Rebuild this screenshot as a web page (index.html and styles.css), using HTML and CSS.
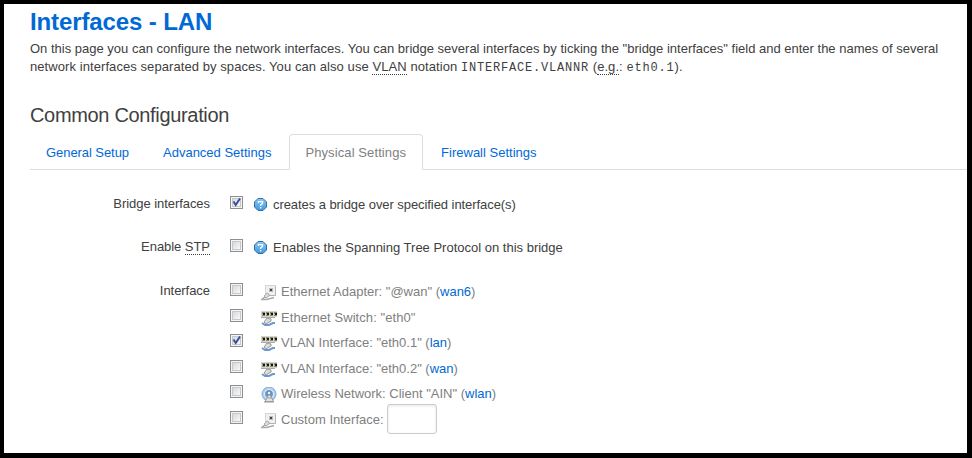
FILE: index.html
```html
<!DOCTYPE html>
<html lang="en">
<head>
<meta charset="utf-8">
<title>Interfaces - LAN</title>
<link rel="stylesheet" href="styles.css">
</head>
<body>
<svg class="sprites" aria-hidden="true">
  <defs>
    <linearGradient id="blue" x1="0" y1="0" x2="0" y2="1"><stop offset="0" stop-color="#8cc8f2"/><stop offset="1" stop-color="#3f9ae0"/></linearGradient>
    <symbol id="help" viewBox="0 0 13 13">
      <path d="M4 .5h5L12.500 4v5L9 12.500H4L.5 9V4z" fill="url(#blue)" stroke="#326da5"/>
      <path d="M4.500 5V3.700h4v1.800L6.600 7v1" fill="none" stroke="#fff" stroke-width="1.300"/>
      <path d="M5.900 9h1.400v1.400H5.900z" fill="#fff"/>
    </symbol>
    <symbol id="adapter" viewBox="0 0 16 16">
      <path d="M4.500.5h10v10h-10z" fill="#f0f0f0" stroke="#d4d4d4"/>
      <path d="M14.500 1v9.500H7" fill="none" stroke="#b4b4b4"/>
      <path d="M8 3h4v4H8z" fill="#bbb"/><path d="M9 4h2v2H9z" fill="#444"/>
      <path d="M3 11l3-3 2 1v2l-3 2z" fill="#ddd" stroke="#aaa"/>
      <path d="M0 15l4-3M1 14.500h5l7-2" fill="none" stroke="#aaa" stroke-width="1.500"/>
    </symbol>
    <symbol id="switch" viewBox="0 0 16 16">
      <path d="M0 0h16v6H0z" fill="#d4d4d4"/>
      <path d="M1 1h3v4H1zM5 1h3v4H5zM9 1h3v4H9zM13 1h3v4h-3z" fill="#8b8b78"/>
      <path d="M2 2h2v2H2zM6 2h2v2H6zM10 2h2v2h-2zM14 2h2v2h-2z" fill="#17170f"/>
      <path d="M1 3h1v1H1zM5 3h1v1H5zM9 3h1v1H9zM13 3h1v1h-1z" fill="#d8c62d"/>
      <path d="M0 6.500h14" stroke="#aaa"/>
      <path d="M3 11l3-4 4 1v2l-5 3z" fill="#dcdcdc" stroke="#999"/>
      <path d="M1 12l3 2h4l4-2h2" fill="none" stroke="#6c98cf" stroke-width="2"/>
    </symbol>
    <symbol id="wireless" viewBox="0 0 16 16">
      <circle cx="8" cy="7" r="7" fill="#b0cfec" stroke="#82abd7"/>
      <circle cx="8" cy="7" r="4.500" fill="#689dd4" stroke="#e8f3fc"/>
      <circle cx="8" cy="6" r="2" fill="#f0f0f0" stroke="#57789b"/>
      <path d="M7.500 8L4 14.500h8.500L9 8z" fill="#e4e4e4" stroke="#999"/>
      <path d="M6.500 11h3.500M3 15h10" stroke="#999"/>
    </symbol>
    <symbol id="tick" viewBox="0 0 13 13">
      <path d="M3.500 5.500L5.700 9 10 2.500" fill="none" stroke="#354f9d" stroke-width="2"/>
    </symbol>
  </defs>
</svg>
<main class="page">
  <h1>Interfaces - LAN</h1>
  <p class="intro">On this page you can configure the network interfaces. You can bridge several interfaces by ticking the "bridge interfaces" field and enter the names of several<br><span class="loose">network interfaces separated by spaces. You can also use <abbr>VLAN</abbr> notation <code>INTERFACE.VLANNR</code> (<abbr>e.g.</abbr>: <code>eth0.1</code>).</span></p>
  <h2>Common Configuration</h2>
  <nav class="tabs">
    <a class="tab tight" href="#">General Setup</a>
    <a class="tab" href="#">Advanced Settings</a>
    <a class="tab active" href="#">Physical Settings</a>
    <a class="tab" href="#">Firewall Settings</a>
  </nav>
  <section class="form">
    <div class="row">
      <div class="label">Bridge interfaces</div>
      <span class="check"><svg><use href="#tick"/></svg></span>
      <svg class="help"><use href="#help"/></svg>
      <span class="hint tight">creates a bridge over specified interface(s)</span>
    </div>
    <div class="row stp">
      <div class="label">Enable <abbr>STP</abbr></div>
      <span class="check"></span>
      <svg class="help"><use href="#help"/></svg>
      <span class="hint">Enables the Spanning Tree Protocol on this bridge</span>
    </div>
    <div class="row group">
      <div class="label">Interface</div>
      <ul class="devices">
        <li><span class="check"></span><svg class="icon"><use href="#adapter"/></svg><span class="device">Ethernet Adapter: "@wan" (<a href="#">wan6</a>)</span></li>
        <li><span class="check"></span><svg class="icon"><use href="#switch"/></svg><span class="device loose">Ethernet Switch: "eth0"</span></li>
        <li><span class="check"><svg><use href="#tick"/></svg></span><svg class="icon"><use href="#switch"/></svg><span class="device">VLAN Interface: "eth0.1" (<a href="#">lan</a>)</span></li>
        <li><span class="check"></span><svg class="icon"><use href="#switch"/></svg><span class="device">VLAN Interface: "eth0.2" (<a href="#">wan</a>)</span></li>
        <li><span class="check"></span><svg class="icon"><use href="#wireless"/></svg><span class="device">Wireless Network: Client "AIN" (<a href="#">wlan</a>)</span></li>
        <li><span class="check"></span><svg class="icon"><use href="#adapter"/></svg><span class="device">Custom Interface:</span><input class="custom" type="text" aria-label="Custom Interface"></li>
      </ul>
    </div>
  </section>
</main>
</body>
</html>
```
FILE: styles.css
```css
* { box-sizing: border-box; }
body {
  margin: 0;
  font: 13px/18px "Liberation Sans", Arial, sans-serif;
  color: #404040;
}
.sprites { position: absolute; width: 0; height: 0; }
.page {
  height: 458px;
  border: solid #000;
  border-width: 4px 5px 5px 4px;
  padding-left: 26px;
  background: #fff;
  overflow: hidden;
  white-space: nowrap;
}
h1, h2, p, ul { margin: 0; padding: 0; }
h1 { font-size: 24px; line-height: 36px; letter-spacing: -.12px; color: #0069d6; }
h2 { margin-top: 20px; font-size: 20px; font-weight: normal; line-height: 36px; letter-spacing: -.33px; }
a { color: #0069d6; text-decoration: none; }
abbr { border-bottom: 1px dotted #404040; }
code { font: 12px/18px "Liberation Mono", monospace; letter-spacing: .8px; }
.loose { letter-spacing: .075px; }
.tight { letter-spacing: -.065px; }
.tabs { display: flex; height: 36px; margin-top: 1px; border-bottom: 1px solid #ddd; }
.tab { height: 36px; margin-right: 2px; padding: 0 15px; line-height: 35px; border: 1px solid transparent; }
.tab.active { padding-right: 16px; letter-spacing: .1px; color: #808080; background: #fff; border-color: #ddd #ddd #fff; border-radius: 4px 4px 0 0; }
.row { display: flex; align-items: flex-start; }
.form { padding-top: 25px; }
.label { width: 180px; margin-right: 20px; text-align: right; letter-spacing: -.05px; }
.check {
  flex: none;
  width: 13px;
  height: 13px;
  margin-top: 1px;
  border: 1px solid #8e8f8f;
  background: linear-gradient(135deg, #cbcfd5, #f6f6f6 75%);
  box-shadow: inset 0 0 0 1px #f4f4f4, inset 0 0 0 2px #c5c9ce;
}
.check svg { display: block; width: 13px; height: 13px; margin: -1px; }
.help { width: 13px; height: 13px; margin: 3px 6px 0 11px; }
.hint { margin-top: 1px; }
.row.stp { margin-top: 24px; }
.row.group { margin-top: 25px; }
.devices { list-style: none; }
.devices li { display: flex; align-items: flex-start; height: 25.600px; }
.icon { flex: none; width: 16px; height: 16px; margin: 3px 4px 0 18px; }
.device { color: #808080; margin-top: 1px; }
.custom {
  width: 50px;
  height: 30px;
  margin: -6px 0 0 3px;
  border: 1px solid #ccc;
  border-radius: 3px;
  box-shadow: inset 0 1px 3px rgba(0, 0, 0, .1);
}
```
